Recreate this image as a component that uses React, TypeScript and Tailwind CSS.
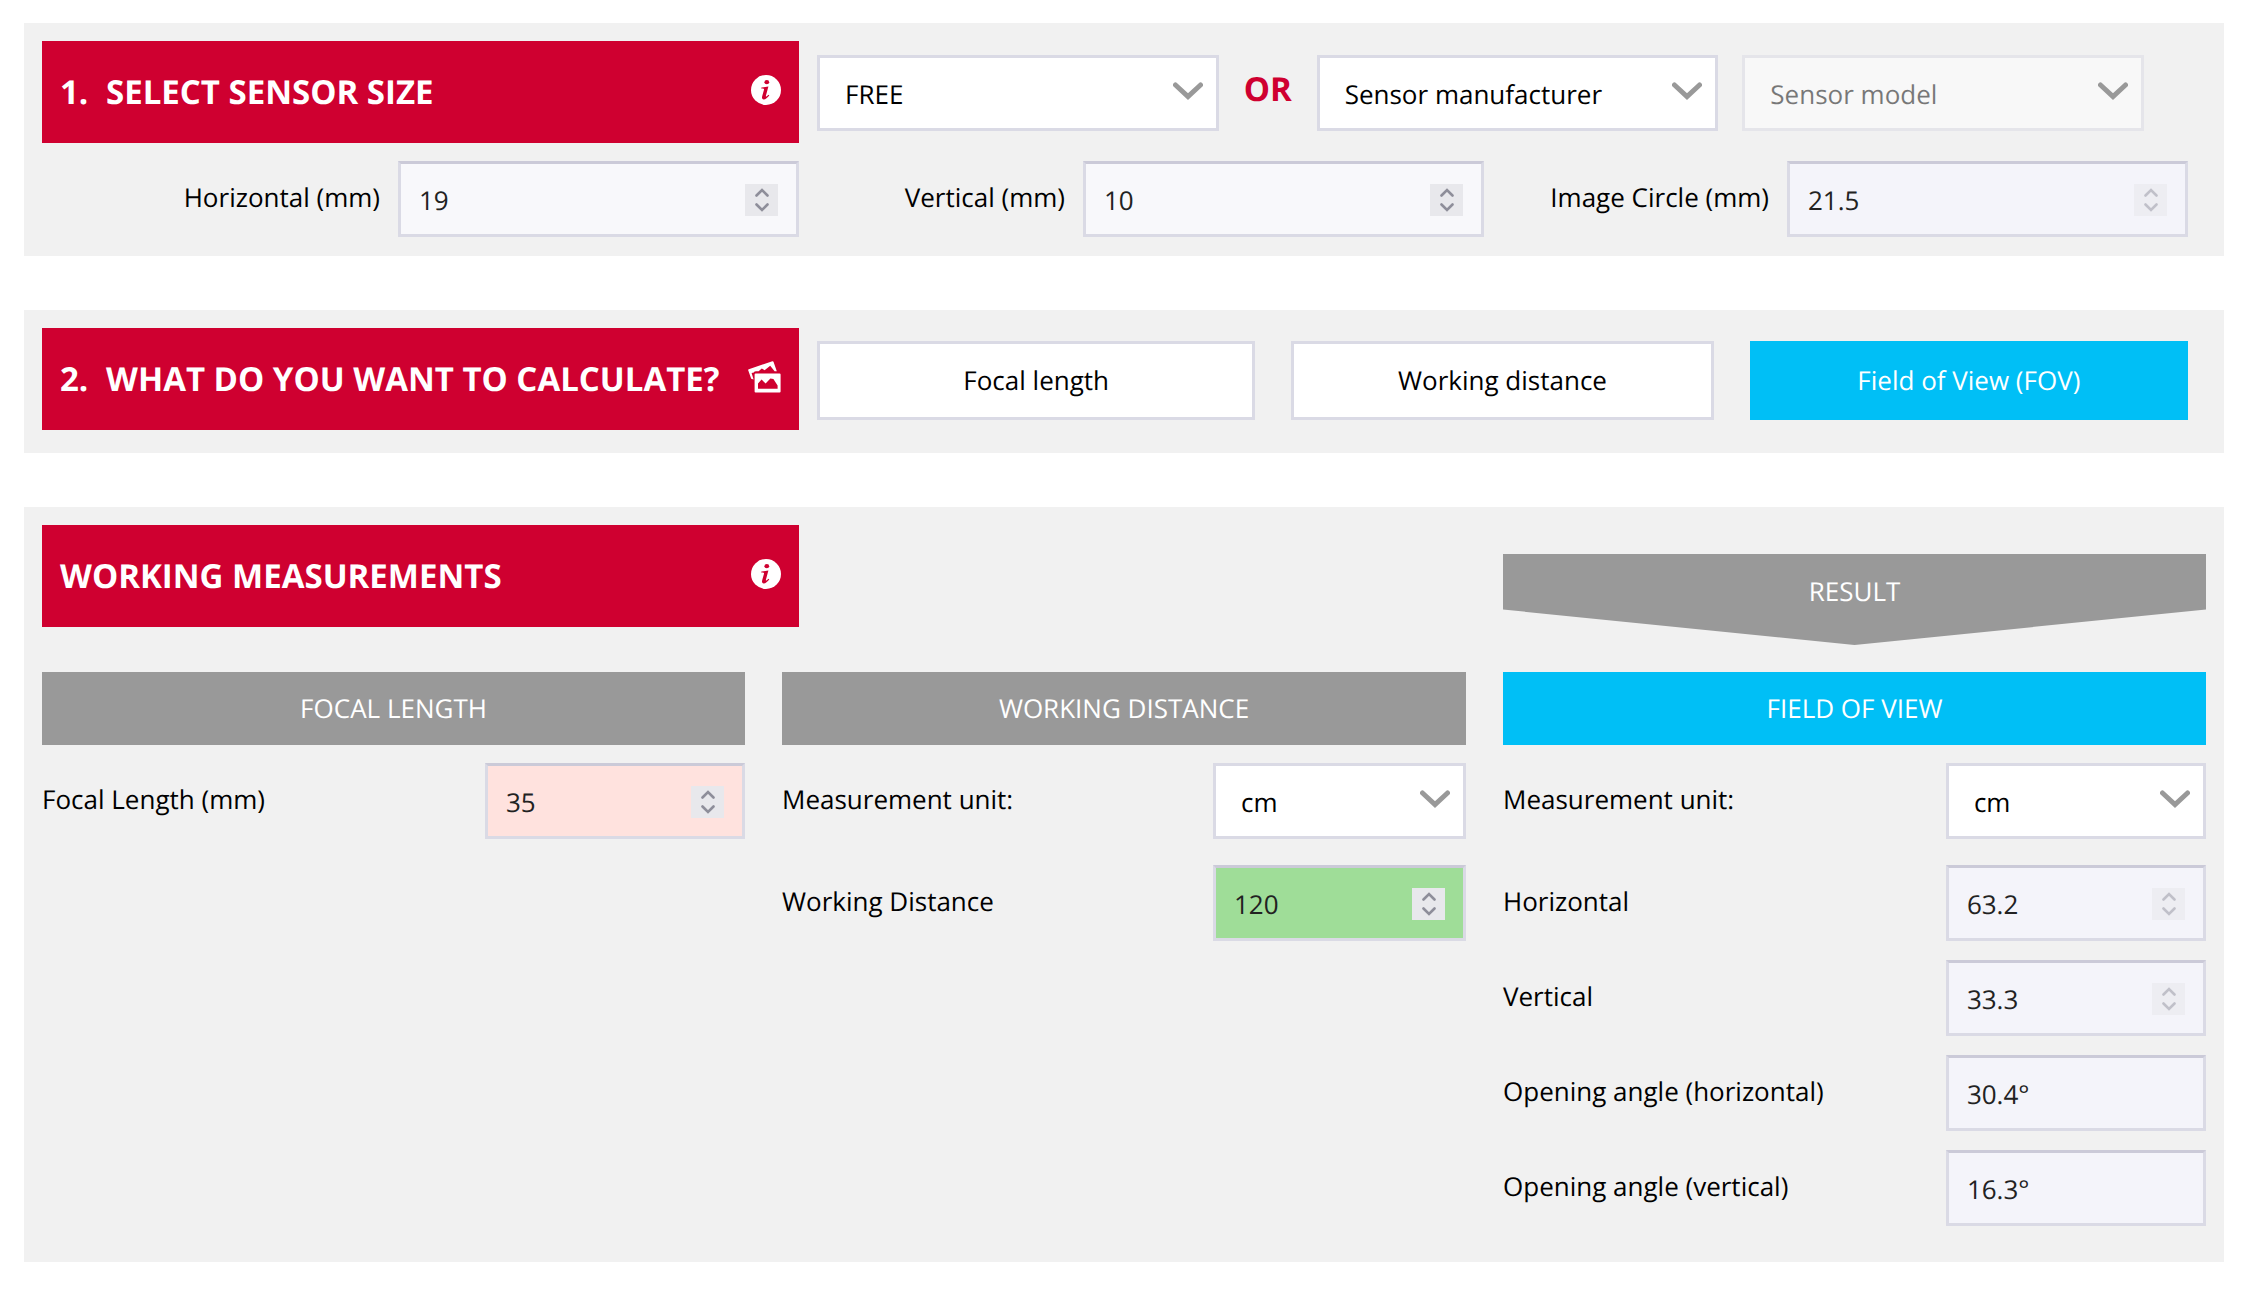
import { useState, type ReactNode } from "react";

const BORDER =
  "h-[76px] w-full border-3 border-[#dadae5] text-[26px] leading-[36px] outline-none";

function InfoIcon() {
  return (
    <svg viewBox="0 0 30 30" className="size-[30px]" aria-hidden="true">
      <circle cx="15" cy="15" r="15" fill="#fff" />
      <ellipse cx="15.8" cy="7.2" rx="2.4" ry="2.1" fill="#cf0030" />
      <path
        d="M10.4 12.5 L17.4 11.6 L14.9 20.8 C14.7 22 15.3 21.9 17.6 19.8 L18.3 20.5 C16.4 22.9 14.6 24.4 12.7 24.4 C10.9 24.4 10.7 22.8 11.3 20.8 L13 14.8 C13.2 13.9 12.6 13.5 10.2 13.6 Z"
        fill="#cf0030"
      />
    </svg>
  );
}

function PicturesIcon() {
  return (
    <svg viewBox="0 0 33 32" className="h-8 w-[33px]" aria-hidden="true">
      <path
        fill="#fff"
        d="M0.8 8.2 L24.4 0.2 Q25.2 0 25.5 0.8 L28.8 10.3 H26.6 L22.2 4.8 L16.6 9.2 L13.8 7.4 L10.6 10.3 H8.2 Q6.2 10.3 5.8 11.4 L3.6 12 L5.6 18.6 L3.2 17.8 L0.2 9.2 Q0 8.5 0.8 8.2 Z"
      />
      <path
        fill="#fff"
        fillRule="evenodd"
        d="M7.6 12.6 H31.6 Q32.6 12.6 32.6 13.6 V30.4 Q32.6 31.4 31.6 31.4 H7.6 Q6.6 31.4 6.6 30.4 V13.6 Q6.6 12.6 7.6 12.6 Z M10 27.8 H29.6 V24.4 L25.4 18 L22.4 17.6 L17.6 22.4 L13.6 18.6 L10 22.6 Z"
      />
    </svg>
  );
}

function Heading({ number, icon, children }: { number?: string; icon: ReactNode; children: ReactNode }) {
  return (
    <div className="flex h-[102px] items-center justify-between bg-[#cf0030] px-[18px] text-white">
      <h2 className="flex text-[33px] leading-[44px] font-bold whitespace-nowrap">
        {number && <span className="w-[46px]">{number}</span>}
        {children}
      </h2>
      <button type="button" aria-label="More information" className="pb-1">
        {icon}
      </button>
    </div>
  );
}

function SelectBox({
  id,
  label,
  options,
  disabled = false,
}: {
  id: string;
  label?: string;
  options: string[];
  disabled?: boolean;
}) {
  return (
    <div className="relative w-full">
      <select
        id={id}
        aria-label={label}
        disabled={disabled}
        className={`${BORDER} appearance-none bg-white pt-[2px] pl-[25px] text-black disabled:opacity-50`}
      >
        {options.map((o) => (
          <option key={o}>{o}</option>
        ))}
      </select>
      <svg
        viewBox="0 0 30 18"
        className="pointer-events-none absolute top-[27px] right-4 h-[18px] w-[30px]"
        aria-hidden="true"
      >
        <path d="M2.5 3 L15 14.5 L27.5 3" fill="none" stroke="#999" strokeWidth="5" strokeLinecap="round" />
      </svg>
    </div>
  );
}

function NumberBox({
  id,
  initial,
  tone = "bg-[#f8f8fb]",
  disabled = false,
}: {
  id: string;
  initial: number;
  tone?: string;
  disabled?: boolean;
}) {
  const [value, setValue] = useState(String(initial));
  const step = (d: number) => setValue((v) => String(Number(v) + d));
  return (
    <div className="relative w-full">
      <input
        id={id}
        type="number"
        value={value}
        disabled={disabled}
        onChange={(e) => setValue(e.target.value)}
        className={`${BORDER} ${tone} border-t-[#cbcad8] px-[18px] pt-[2px] text-[#222] [appearance:textfield] [&::-webkit-inner-spin-button]:appearance-none`}
      />
      <div
        className={`absolute top-[23px] right-[21px] flex h-8 w-[33px] flex-col bg-[#e8e8ec] text-[#8e8e9a] ${disabled ? "opacity-50" : ""}`}
      >
        <button
          type="button"
          aria-label="Increase"
          disabled={disabled}
          onClick={() => step(1)}
          className="flex flex-1 items-end justify-center pb-[3px]"
        >
          <svg viewBox="0 0 14 9" className="h-[9px] w-[14px]" aria-hidden="true">
            <path d="M1.5 7.5 L7 2 L12.5 7.5" fill="none" stroke="currentColor" strokeWidth="2.6" strokeLinecap="round" />
          </svg>
        </button>
        <button
          type="button"
          aria-label="Decrease"
          disabled={disabled}
          onClick={() => step(-1)}
          className="flex flex-1 items-start justify-center pt-[3px]"
        >
          <svg viewBox="0 0 14 9" className="h-[9px] w-[14px]" aria-hidden="true">
            <path d="M1.5 1.5 L7 7 L12.5 1.5" fill="none" stroke="currentColor" strokeWidth="2.6" strokeLinecap="round" />
          </svg>
        </button>
      </div>
    </div>
  );
}

function TextBox({ id, value }: { id: string; value: string }) {
  return (
    <input
      id={id}
      type="text"
      value={value}
      disabled
      readOnly
      className={`${BORDER} border-t-[#cbcad8] bg-[#f4f4fa] px-[18px] pt-[2px] text-[#222]`}
    />
  );
}

function SensorField({ id, label, children }: { id: string; label: string; children: ReactNode }) {
  return (
    <div className="flex items-center justify-end gap-[18px]">
      <label htmlFor={id} className="pb-1 whitespace-nowrap">
        {label}
      </label>
      <div className="w-[401px]">{children}</div>
    </div>
  );
}

function Row({ id, label, children }: { id: string; label: string; children: ReactNode }) {
  return (
    <div className="flex items-center justify-between">
      <label htmlFor={id} className="pb-1">
        {label}
      </label>
      <div className="w-[37%]">{children}</div>
    </div>
  );
}

function ColumnTitle({ tone = "bg-[#999]", children }: { tone?: string; children: ReactNode }) {
  return (
    <h3 className={`mb-[18px] flex h-[73px] items-center justify-center pb-[2px] text-white ${tone}`}>
      {children}
    </h3>
  );
}

const MODES = ["Focal length", "Working distance", "Field of View (FOV)"];
const UNITS = ["cm", "mm", "m", "inch"];

export default function App() {
  const [mode, setMode] = useState(MODES[2]);
  return (
    <main className="flex flex-col gap-[54px] bg-white px-6 py-[23px] font-['Open_Sans',sans-serif] text-[26px] leading-[36px] text-black [&_*]:[text-rendering:geometricPrecision]">
      <section className="bg-[#f1f1f1] p-[18px] pb-[19px]">
        <div className="grid grid-cols-[757fr_1389fr] gap-[18px]">
          <Heading number="1." icon={<InfoIcon />}>
            SELECT SENSOR SIZE
          </Heading>
          <div className="flex items-center pt-[2px] pr-[62px]">
            <div className="flex-1">
              <SelectBox id="preset" label="Sensor size" options={["FREE", "1/2\"", "2/3\"", "1\""]} />
            </div>
            <strong className="w-[98px] pb-2 text-center text-[33px] leading-[44px] text-[#cf0030]">OR</strong>
            <div className="flex-1">
              <SelectBox id="manufacturer" label="Manufacturer" options={["Sensor manufacturer"]} />
            </div>
            <div className="ml-6 flex-1">
              <SelectBox id="model" label="Model" options={["Sensor model"]} disabled />
            </div>
          </div>
        </div>
        <div className="mt-[18px] grid grid-cols-[757fr_685fr_704fr] pr-[18px]">
          <SensorField id="sensor-h" label="Horizontal (mm)">
            <NumberBox id="sensor-h" initial={19} />
          </SensorField>
          <SensorField id="sensor-v" label="Vertical (mm)">
            <NumberBox id="sensor-v" initial={10} />
          </SensorField>
          <SensorField id="circle" label="Image Circle (mm)">
            <NumberBox id="circle" initial={21.5} tone="bg-[#f4f4fa]" disabled />
          </SensorField>
        </div>
      </section>

      <section className="grid grid-cols-[757fr_1389fr] gap-[18px] bg-[#f1f1f1] p-[18px] pb-[23px]">
        <Heading number="2." icon={<PicturesIcon />}>
          WHAT DO YOU WANT TO CALCULATE?
        </Heading>
        <div className="grid grid-cols-[438fr_422fr_438fr] items-center gap-9 pt-[2px] pr-[18px]">
          {MODES.map((m) => (
            <button
              key={m}
              type="button"
              aria-pressed={m === mode}
              onClick={() => setMode(m)}
              className={`h-[79px] border-3 ${
                m === mode ? "border-[#00bff6] bg-[#00bff6] text-white" : "border-[#dadae5] bg-white text-black"
              }`}
            >
              {m}
            </button>
          ))}
        </div>
      </section>

      <section className="bg-[#f1f1f1] p-[18px] pb-9">
        <div className="grid grid-cols-[757fr_686fr_703fr] gap-x-[9px]">
          <Heading icon={<InfoIcon />}>WORKING MEASUREMENTS</Heading>
          <div className="col-start-3 mt-[29px] h-[91px] bg-[#999] pt-[19px] text-center text-white [clip-path:polygon(0_0,100%_0,100%_61%,50%_100%,0_61%)]">
            RESULT
          </div>
        </div>
        <div className="mt-[27px] grid grid-cols-[703fr_684fr_703fr] gap-[37px]">
          <div>
            <ColumnTitle>FOCAL LENGTH</ColumnTitle>
            <Row id="focal" label="Focal Length (mm)">
              <NumberBox id="focal" initial={35} tone="bg-[#ffe2de]" />
            </Row>
          </div>
          <div>
            <ColumnTitle>WORKING DISTANCE</ColumnTitle>
            <div className="flex flex-col gap-[26px]">
              <Row id="wd-unit" label="Measurement unit:">
                <SelectBox id="wd-unit" options={UNITS} />
              </Row>
              <Row id="wd" label="Working Distance">
                <NumberBox id="wd" initial={120} tone="bg-[#9fdd98]" />
              </Row>
            </div>
          </div>
          <div>
            <ColumnTitle tone="bg-[#00bff6]">FIELD OF VIEW</ColumnTitle>
            <Row id="fov-unit" label="Measurement unit:">
              <SelectBox id="fov-unit" options={UNITS} />
            </Row>
            <div className="mt-[26px] flex flex-col gap-[19px]">
              <Row id="fov-h" label="Horizontal">
                <NumberBox id="fov-h" initial={63.2} tone="bg-[#f4f4fa]" disabled />
              </Row>
              <Row id="fov-v" label="Vertical">
                <NumberBox id="fov-v" initial={33.3} tone="bg-[#f4f4fa]" disabled />
              </Row>
              <Row id="angle-h" label="Opening angle (horizontal)">
                <TextBox id="angle-h" value="30.4°" />
              </Row>
              <Row id="angle-v" label="Opening angle (vertical)">
                <TextBox id="angle-v" value="16.3°" />
              </Row>
            </div>
          </div>
        </div>
      </section>
    </main>
  );
}
